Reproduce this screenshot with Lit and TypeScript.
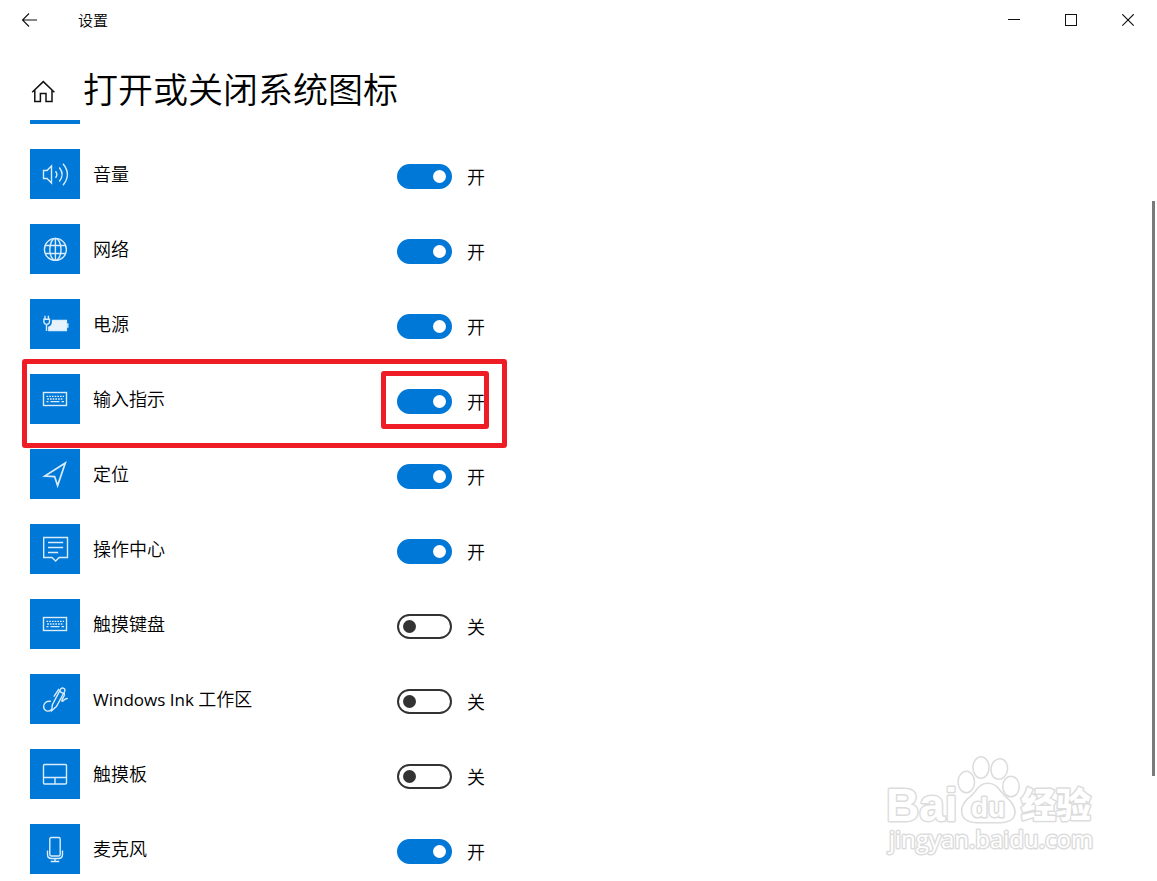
import { LitElement, html, svg, css, nothing, SVGTemplateResult, TemplateResult } from "lit";
import { customElement, property, state } from "lit/decorators.js";

type IconName =
  | "volume" | "network" | "power" | "keyboard" | "location"
  | "action" | "ink" | "touchpad" | "mic";

interface SystemIcon {
  id: string;
  label: string | TemplateResult;
  icon: IconName;
  on: boolean;
  marked?: boolean;
}

const GLYPHS: Record<IconName, SVGTemplateResult> = {
  volume: svg`
    <path d="M13.5 21.5H17L21.5 17V34L17 29.5H13.5Z" />
    <path d="M25.5 22.2Q28.3 25.5 25.5 28.8" />
    <path d="M29.3 18.5Q35 25.5 29.3 32.5" />
    <path d="M33 14.8Q41.8 25.5 33 36.2" />`,
  network: svg`
    <circle cx="25.4" cy="25.4" r="11" />
    <ellipse cx="25.4" cy="25.4" rx="5.6" ry="11" />
    <path d="M25.4 14.4V36.4M15.2 21.5H35.6M15.2 29.5H35.6" />`,
  power: svg`
    <path d="M15 16.8V20M18.4 16.8V20" />
    <path d="M13.2 20.3H20.2M13.9 20.3V23Q14.2 25.4 16.7 25.4Q19.2 25.4 19.5 23V20.3" />
    <path d="M16.5 25.4V32" />
    <path d="M21.8 21.5H36.4V31.6H18.8V27.5" />
    <path class="solid" d="M22 22H36V31H19V27.6Q22 26.4 22 22Z" />
    <path d="M37.8 24.3V28.8" />`,
  keyboard: svg`
    <rect x="13.5" y="18.5" width="23" height="13" />
    <path stroke-dasharray="1.7 1" d="M16.5 22.4H34" />
    <path stroke-dasharray="1.7 1" d="M17.2 25H33.5" />
    <path d="M16.5 27.6H18.5M20.5 27.6H29.5M31.5 27.6H34" />`,
  location: svg`<path d="M35.3 14L14.8 27L24.6 27.6L27.6 36.6Z" stroke-width="1.7" />`,
  action: svg`
    <path d="M13.7 13.5H37.5V33.5H29.2L25.6 37L22 33.5H13.7Z" />
    <path d="M18 18.5H33.2M18 23.5H33.2M18 28.5H28.2" />`,
  ink: svg`
    <path d="M21 27.4C16.4 26.4 13.4 29.4 13.6 33C14 37 18.5 38.4 21.2 35.8" />
    <path d="M21.6 36.8L22.4 30.6L30.2 15.8C31 14.2 32.4 13.6 33.8 14.3C35.2 15 35.2 16.6 34.4 18L26.4 32.6Z" />
    <path d="M29.6 17.4L33.6 19.6M29 14.8L23.8 22.6" />
    <path d="M34 19.4C36.2 21 30.8 25.8 32 27.2C33.2 28.2 34.6 23.6 37.8 24.6" />`,
  touchpad: svg`
    <rect x="13.5" y="15.5" width="23" height="19.5" rx="1" />
    <path d="M13.5 28.5H36.5M25 28.5V35" />`,
  mic: svg`
    <rect x="19.8" y="13.5" width="10.4" height="18.5" rx="1.5" />
    <path d="M17.5 26.5V30.5Q17.5 34.5 21.5 34.5H28.5Q32.5 34.5 32.5 30.5V26.5M25 34.5V37.5M20.7 37.5H29.3" />`,
};

@customElement("icon-tile")
class IconTile extends LitElement {
  @property() name: IconName = "volume";

  static styles = css`
    :host {
      display: block;
      width: 50px;
      height: 50px;
      background: #0078d7;
    }
    .glyph {
      display: block;
      fill: none;
      stroke: #d9ecfb;
      stroke-width: 1.4;
    }
    .solid {
      fill: #e6f2fc;
      stroke: none;
    }
  `;

  render() {
    return html`<svg class="glyph" width="50" height="50" viewBox="0 0 50 50" aria-hidden="true">
      ${GLYPHS[this.name]}
    </svg>`;
  }
}

@customElement("baidu-mark")
class BaiduMark extends LitElement {
  static styles = css`
    :host {
      display: block;
    }
    .mark {
      display: block;
      fill: #fff;
      stroke: #dcdcdc;
      stroke-width: 3;
      paint-order: stroke;
      stroke-linejoin: round;
    }
    .paw {
      stroke-width: 3;
    }
    .latin {
      font-family: "Liberation Sans", Arial, sans-serif;
      font-weight: 700;
    }
    .big {
      font-size: 46px;
    }
    .small {
      font-size: 28px;
    }
    .han {
      font: 900 35px "Noto Sans CJK SC", sans-serif;
    }
    .url {
      font: 400 24px "Open Sans", sans-serif;
    }
  `;

  render() {
    return html`<svg class="mark" width="220" height="110" viewBox="0 0 220 110">
      <g class="paw">
        <ellipse cx="86.3" cy="32" rx="7.5" ry="10" />
        <ellipse cx="101" cy="17.5" rx="7.3" ry="10" />
        <ellipse cx="119.3" cy="19" rx="7.5" ry="9.5" transform="rotate(8 119.3 19)" />
        <ellipse cx="131" cy="36.5" rx="7.5" ry="9.5" />
        <path d="M108 34C117 34 119 42 126 48C133 54 136 61 133 67C129 73 118 72 108 72C98 72 89 73 84 67C80 60 84 52 91 47C98 41 99 34 108 34Z" />
      </g>
      <text class="latin big" x="6" y="71">Bai</text>
      <text class="latin small" x="91" y="67">du</text>
      <text class="han" x="141" y="68">经验</text>
      <text class="url" x="9" y="98">jingyan.baidu.com</text>
    </svg>`;
  }
}

@customElement("app-root")
class AppRoot extends LitElement {
  @state() private items: SystemIcon[] = [
    { id: "volume", label: "音量", icon: "volume", on: true },
    { id: "network", label: "网络", icon: "network", on: true },
    { id: "power", label: "电源", icon: "power", on: true },
    { id: "input", label: "输入指示", icon: "keyboard", on: true, marked: true },
    { id: "location", label: "定位", icon: "location", on: true },
    { id: "action", label: "操作中心", icon: "action", on: true },
    { id: "touchkeys", label: "触摸键盘", icon: "keyboard", on: false },
    { id: "ink", label: html`<span class="latin">Windows Ink </span>工作区`, icon: "ink", on: false },
    { id: "touchpad", label: "触摸板", icon: "touchpad", on: false },
    { id: "mic", label: "麦克风", icon: "mic", on: true },
  ];

  static styles = css`
    :host {
      display: flex;
      flex-direction: column;
      position: relative;
      height: 100vh;
      overflow: hidden;
      background: #fff;
      color: #000;
      font: 350 18px/24px "Noto Sans CJK SC", sans-serif;
    }
    .titlebar {
      display: flex;
      align-items: center;
      height: 40px;
      flex: none;
    }
    .bar-button {
      display: flex;
      align-items: center;
      justify-content: center;
      width: 57px;
      height: 40px;
      padding: 0;
      border: 0;
      background: none;
    }
    .stroke {
      display: block;
      fill: none;
      stroke: #111;
    }
    .app-name {
      flex: 1;
      padding-left: 21px;
      font-size: 15px;
    }
    .header {
      display: flex;
      align-items: center;
      gap: 28px;
      flex: none;
      height: 80px;
      padding: 16px 0 0 31px;
      box-sizing: border-box;
    }
    .home {
      padding: 8px 0 0;
      border: 0;
      background: none;
    }
    .title {
      margin: 0;
      font-weight: 350;
      font-size: 35px;
      line-height: 40px;
    }
    .body {
      flex: 1;
      min-height: 0;
      display: flex;
      justify-content: space-between;
    }
    .list {
      list-style: none;
      margin: 0;
      padding: 0 0 0 30px;
      overflow: hidden;
      flex: 1;
    }
    .previous {
      width: 50px;
      height: 4px;
      background: #0078d7;
    }
    .row {
      position: relative;
      display: grid;
      grid-template-columns: 50px 291px auto;
      column-gap: 13px;
      align-items: center;
      height: 50px;
      margin-top: 25px;
      font-family: "Open Sans", "Noto Sans CJK SC", sans-serif;
    }
    .latin {
      font-size: 17px;
      font-weight: 400;
    }
    .control {
      display: flex;
      align-items: center;
      gap: 15px;
      padding-top: 5px;
    }
    .switch {
      appearance: none;
      flex: none;
      box-sizing: border-box;
      display: flex;
      align-items: center;
      width: 55px;
      height: 25px;
      margin: 0;
      padding: 0 4px;
      border: 2px solid #333;
      border-radius: 13px;
      background: #fff;
    }
    .switch::before {
      content: "";
      width: 13px;
      height: 13px;
      border-radius: 50%;
      background: #333;
    }
    .switch:checked {
      justify-content: flex-end;
      border-color: #0078d7;
      background: #0078d7;
    }
    .switch:checked::before {
      background: #fff;
    }
    .frame {
      position: absolute;
      z-index: 1;
      box-sizing: border-box;
      border: 5px solid #ee1c25;
      border-radius: 3px;
      pointer-events: none;
    }
    .frame-row {
      left: -8px;
      top: -15px;
      width: 485px;
      height: 89px;
    }
    .frame-switch {
      left: 351px;
      top: -3px;
      width: 108px;
      height: 58px;
    }
    .track {
      display: grid;
      grid-template-rows: 81fr 575fr 105fr;
      flex: none;
      width: 3px;
      padding-right: 2px;
    }
    .thumb {
      grid-row: 2;
      background: #7a7a7a;
    }
    .watermark {
      position: absolute;
      right: 57px;
      bottom: 21px;
    }
  `;

  private toggle(id: string) {
    this.items = this.items.map((it) => (it.id === id ? { ...it, on: !it.on } : it));
  }

  private row(it: SystemIcon) {
    return html`<li class="row">
      <icon-tile .name=${it.icon}></icon-tile>
      <label for=${it.id}>${it.label}</label>
      <div class="control">
        <input
          class="switch"
          type="checkbox"
          role="switch"
          id=${it.id}
          .checked=${it.on}
          @change=${() => this.toggle(it.id)}
        />
        <span>${it.on ? "开" : "关"}</span>
      </div>
      ${it.marked
        ? html`<div class="frame frame-row"></div><div class="frame frame-switch"></div>`
        : nothing}
    </li>`;
  }

  render() {
    return html`
      <header class="titlebar">
        <button class="bar-button" aria-label="返回">
          <svg class="stroke" width="17" height="15" viewBox="0 0 17 15">
            <path d="M17 7H2.5M9 0.5L2.5 7L9 13.5" stroke-width="1.1" />
          </svg>
        </button>
        <span class="app-name">设置</span>
        <button class="bar-button" aria-label="最小化">
          <svg class="stroke" width="13" height="13" viewBox="0 0 13 13"><path d="M0 5.5H12" /></svg>
        </button>
        <button class="bar-button" aria-label="最大化">
          <svg class="stroke" width="13" height="13" viewBox="0 0 13 13">
            <rect x="0.5" y="0.5" width="11" height="11" />
          </svg>
        </button>
        <button class="bar-button" aria-label="关闭">
          <svg class="stroke" width="13" height="13" viewBox="0 0 13 13">
            <path d="M0.3 0.3L11.7 11.7M11.7 0.3L0.3 11.7" stroke-width="1.2" />
          </svg>
        </button>
      </header>
      <div class="header">
        <button class="home" aria-label="主页">
          <svg class="stroke" width="24" height="24" viewBox="0 0 24 24">
            <path
              d="M1.2 12.2L12.3 1.6L23.4 12.2M3.8 10V21.4H9.4V13.4H15V21.4H21V10"
              stroke-width="1.5"
            />
          </svg>
        </button>
        <h1 class="title">打开或关闭系统图标</h1>
      </div>
      <main class="body">
        <ul class="list">
          <li class="previous" aria-hidden="true"></li>
          ${this.items.map((it) => this.row(it))}
        </ul>
        <div class="track"><div class="thumb"></div></div>
      </main>
      <baidu-mark class="watermark"></baidu-mark>
    `;
  }
}
